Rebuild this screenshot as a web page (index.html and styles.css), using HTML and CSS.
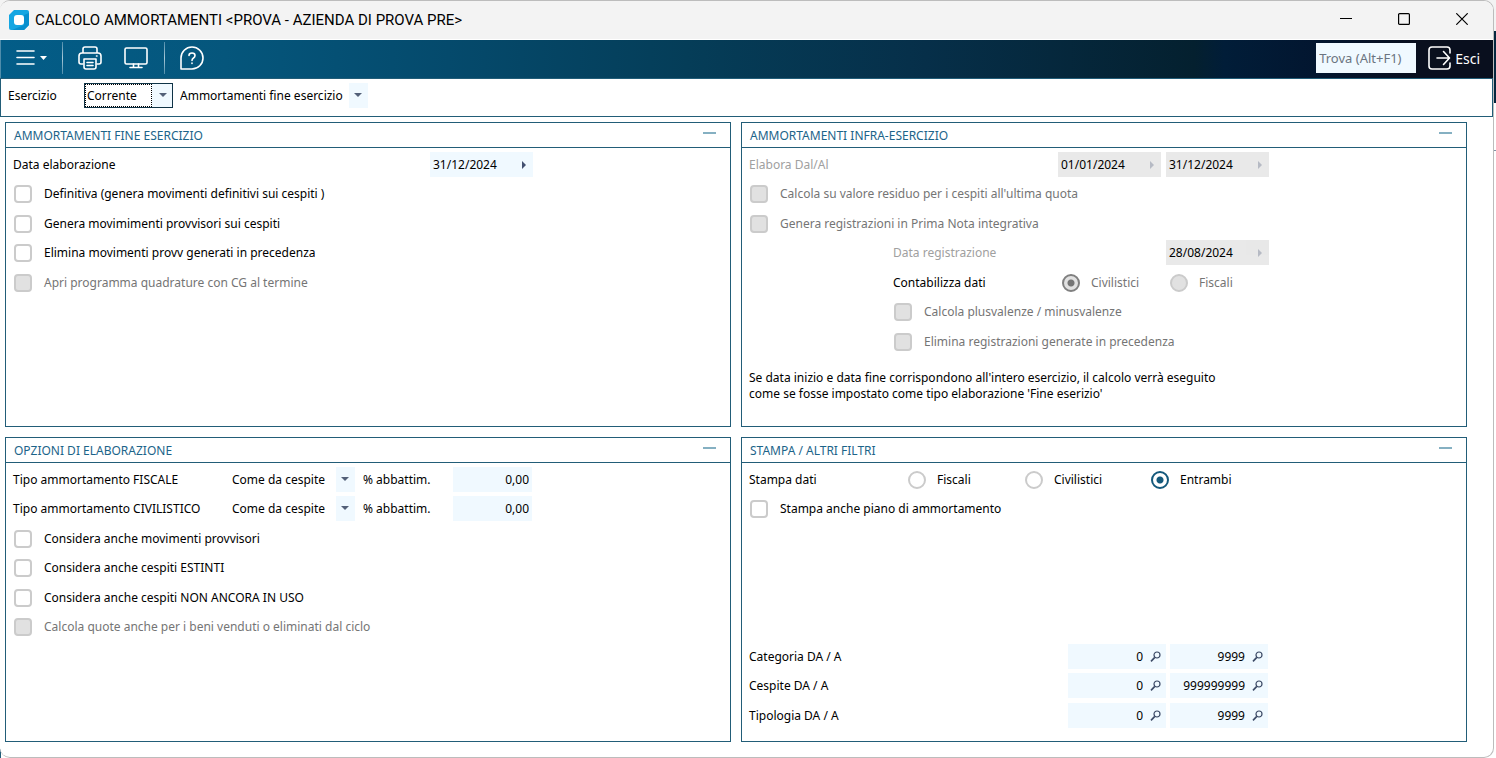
FILE: index.html
```html
<!DOCTYPE html>
<html lang="it">

<head>
    <meta charset="UTF-8">
    <meta name="viewport" content="width=device-width, initial-scale=1.0">
    <title>Calcolo ammortamenti</title>
    <link rel="stylesheet" href="styles.css">
</head>

<body>
    <svg class="sprite" aria-hidden="true">
        <symbol id="lens" viewBox="0 0 12 12">
            <circle cx="7" cy="4" r="3" fill="none" stroke="currentColor" stroke-width="1.2" />
            <path d="M4.8 6.4L1 10.4" fill="none" stroke="currentColor" stroke-width="1.6" />
        </symbol>
    </svg>

    <div class="window">
        <header class="titlebar">
            <svg class="logo" viewBox="0 0 20 20">
                <path d="M5 0H20V15L15 20H0V5Z" fill="#14a6e2" />
                <path d="M20 3V15L15 20H3L15 15V5Z" fill="#078fce" />
                <rect x="5" y="5" width="10" height="10" rx="3" fill="#fff" />
            </svg>
            <h1>CALCOLO AMMORTAMENTI &lt;PROVA - AZIENDA DI PROVA PRE&gt;</h1>
            <div class="window-buttons">
                <button type="button" aria-label="Riduci a icona">
                    <svg viewBox="0 0 12 12"><path d="M0 5.500H12" /></svg>
                </button>
                <button type="button" aria-label="Ingrandisci">
                    <svg viewBox="0 0 12 12"><rect x=".6" y=".6" width="10.8" height="10.8" rx="1" /></svg>
                </button>
                <button type="button" aria-label="Chiudi">
                    <svg viewBox="0 0 12 12"><path d="M.3 .3L11.7 11.7M11.7 .3L.3 11.7" /></svg>
                </button>
            </div>
        </header>

        <nav class="toolbar">
            <button type="button" class="tool menu" aria-label="Menu">
                <svg viewBox="0 0 32 24">
                    <path d="M2 5H19M2 11.500H19M2 18H19" />
                    <path d="M25 10H32L28.500 14Z" class="solid" />
                </svg>
            </button>
            <span class="divider"></span>
            <button type="button" class="tool" aria-label="Stampa">
                <svg viewBox="0 0 24 24">
                    <path d="M5 7V3Q5 1 7 1H17Q19 1 19 3V7M5 18H3Q1 18 1 16V10Q1 7 4 7H20Q23 7 23 10V16Q23 18 21 18H19" />
                    <path d="M6 13H18V21Q18 23 16 23H8Q6 23 6 21ZM9 16.500H15M9 19.500H15M18.500 10H19" />
                </svg>
            </button>
            <button type="button" class="tool last" aria-label="Video">
                <svg viewBox="0 0 24 24">
                    <rect x="1" y="2" width="22" height="16" rx="1.5" />
                    <path d="M9.500 18V21M14.500 18V21M6 21.500H18" />
                </svg>
            </button>
            <span class="divider"></span>
            <button type="button" class="tool" aria-label="Aiuto">
                <svg viewBox="0 0 24 24">
                    <path d="M1 23V12A11 11 0 1 1 12 23Z" />
                    <path d="M9 9.500Q9 7 12 7Q15 7 15 9.500Q15 11 13.500 12Q12 13 12 14.500M12 17V17.500" />
                </svg>
            </button>
            <input type="text" class="search" placeholder="Trova (Alt+F1)" aria-label="Trova">
            <button type="button" class="exit">
                <svg viewBox="0 0 24 24">
                    <path d="M22 7V4Q22 1 19 1H4Q1 1 1 4V20Q1 23 4 23H19Q22 23 22 20V17" />
                    <path d="M9 12H21M15.500 5.500L21.500 12L15.500 18.500" />
                </svg>
                Esci
            </button>
        </nav>

        <div class="filters">
            <label for="esercizio">Esercizio</label>
            <select id="esercizio" class="focused">
                <option>Corrente</option>
            </select>
            <select class="tipo" aria-label="Tipo elaborazione">
                <option>Ammortamenti fine esercizio</option>
            </select>
        </div>

        <main class="panels">
            <section class="panel">
                <div class="panel-head">
                    <h2>AMMORTAMENTI FINE ESERCIZIO</h2>
                    <button type="button" aria-label="Comprimi"></button>
                </div>
                <div class="rows">
                    <div class="row">
                        <label for="data-elab" class="name-date">Data elaborazione</label>
                        <span class="date"><input type="text" id="data-elab" value="31/12/2024"><button type="button" aria-label="Calendario"></button></span>
                    </div>
                    <label class="row"><input type="checkbox">Definitiva (genera movimenti definitivi sui cespiti )</label>
                    <label class="row"><input type="checkbox">Genera movimimenti provvisori sui cespiti</label>
                    <label class="row"><input type="checkbox">Elimina movimenti provv generati in precedenza</label>
                    <label class="row off"><input type="checkbox" disabled>Apri programma quadrature con CG al termine</label>
                </div>
            </section>

            <section class="panel">
                <div class="panel-head">
                    <h2>AMMORTAMENTI INFRA-ESERCIZIO</h2>
                    <button type="button" aria-label="Comprimi"></button>
                </div>
                <div class="rows">
                    <div class="row">
                        <label for="dal" class="name-range pale">Elabora Dal/Al</label>
                        <span class="date"><input type="text" id="dal" value="01/01/2024" disabled><button type="button" aria-label="Calendario" disabled></button></span>
                        <span class="date"><input type="text" aria-label="Al" value="31/12/2024" disabled><button type="button" aria-label="Calendario" disabled></button></span>
                    </div>
                    <label class="row off"><input type="checkbox" disabled>Calcola su valore residuo per i cespiti all'ultima quota</label>
                    <label class="row off"><input type="checkbox" disabled>Genera registrazioni in Prima Nota integrativa</label>
                    <div class="row nested">
                        <label for="data-reg" class="name-reg pale">Data registrazione</label>
                        <span class="date"><input type="text" id="data-reg" value="28/08/2024" disabled><button type="button" aria-label="Calendario" disabled></button></span>
                    </div>
                    <div class="row nested" role="radiogroup" aria-label="Contabilizza dati">
                        <span class="name-cont">Contabilizza dati</span>
                        <label class="choice short off"><input type="radio" name="contabilizza" checked disabled>Civilistici</label>
                        <label class="choice short off"><input type="radio" name="contabilizza" disabled>Fiscali</label>
                    </div>
                    <label class="row nested off"><input type="checkbox" disabled>Calcola plusvalenze / minusvalenze</label>
                    <label class="row nested off"><input type="checkbox" disabled>Elimina registrazioni generate in precedenza</label>
                </div>
                <p class="note">Se data inizio e data fine corrispondono all'intero esercizio, il calcolo verrà eseguito<br>come se fosse impostato come tipo elaborazione 'Fine eserizio'</p>
            </section>

            <section class="panel">
                <div class="panel-head">
                    <h2>OPZIONI DI ELABORAZIONE</h2>
                    <button type="button" aria-label="Comprimi"></button>
                </div>
                <div class="rows">
                    <div class="row">
                        <label for="tipo-fisc" class="name-tipo">Tipo ammortamento FISCALE</label>
                        <select id="tipo-fisc" class="come">
                            <option>Come da cespite</option>
                        </select>
                        <label for="abb-fisc" class="name-perc">% abbattim.</label>
                        <input type="text" id="abb-fisc" class="amount" value="0,00">
                    </div>
                    <div class="row">
                        <label for="tipo-civ" class="name-tipo">Tipo ammortamento CIVILISTICO</label>
                        <select id="tipo-civ" class="come">
                            <option>Come da cespite</option>
                        </select>
                        <label for="abb-civ" class="name-perc">% abbattim.</label>
                        <input type="text" id="abb-civ" class="amount" value="0,00">
                    </div>
                    <label class="row"><input type="checkbox">Considera anche movimenti provvisori</label>
                    <label class="row"><input type="checkbox">Considera anche cespiti ESTINTI</label>
                    <label class="row"><input type="checkbox">Considera anche cespiti NON ANCORA IN USO</label>
                    <label class="row off"><input type="checkbox" disabled>Calcola quote anche per i beni venduti o eliminati dal ciclo</label>
                </div>
            </section>

            <section class="panel">
                <div class="panel-head">
                    <h2>STAMPA / ALTRI FILTRI</h2>
                    <button type="button" aria-label="Comprimi"></button>
                </div>
                <div class="rows">
                    <div class="row" role="radiogroup" aria-label="Stampa dati">
                        <span class="name-stampa">Stampa dati</span>
                        <label class="choice"><input type="radio" name="stampa">Fiscali</label>
                        <label class="choice wide"><input type="radio" name="stampa">Civilistici</label>
                        <label class="choice"><input type="radio" name="stampa" checked>Entrambi</label>
                    </div>
                    <label class="row"><input type="checkbox">Stampa anche piano di ammortamento</label>
                </div>
                <div class="rows bottom">
                    <div class="row">
                        <label for="cat-da" class="name-lookup">Categoria DA / A</label>
                        <span class="lookup"><input type="text" id="cat-da" value="0"><button type="button" aria-label="Cerca"><svg><use href="#lens" /></svg></button></span>
                        <span class="lookup"><input type="text" aria-label="Categoria A" value="9999"><button type="button" aria-label="Cerca"><svg><use href="#lens" /></svg></button></span>
                    </div>
                    <div class="row">
                        <label for="cesp-da" class="name-lookup">Cespite DA / A</label>
                        <span class="lookup"><input type="text" id="cesp-da" value="0"><button type="button" aria-label="Cerca"><svg><use href="#lens" /></svg></button></span>
                        <span class="lookup"><input type="text" aria-label="Cespite A" value="999999999"><button type="button" aria-label="Cerca"><svg><use href="#lens" /></svg></button></span>
                    </div>
                    <div class="row">
                        <label for="tip-da" class="name-lookup">Tipologia DA / A</label>
                        <span class="lookup"><input type="text" id="tip-da" value="0"><button type="button" aria-label="Cerca"><svg><use href="#lens" /></svg></button></span>
                        <span class="lookup"><input type="text" aria-label="Tipologia A" value="9999"><button type="button" aria-label="Cerca"><svg><use href="#lens" /></svg></button></span>
                    </div>
                </div>
            </section>
        </main>
    </div>
</body>

</html>
```
FILE: styles.css
```css
* {
    box-sizing: border-box;
}

body {
    margin: 0;
    padding-right: 2px;
    font-family: "Noto Sans", Tahoma, sans-serif;
    font-size: 12px;
    color: #000;
    background: linear-gradient(#225d78, #225d78) no-repeat left bottom / 1px 9px,
        linear-gradient(#f3f3f3 31px, #04273f 31px, #04273f 103px, #fff 103px, #fff 150px, #8192a5 150px, #8192a5 151px, #fff 151px);
}

input,
select,
button {
    font: inherit;
    color: inherit;
    margin: 0;
    padding: 0;
    border: none;
    border-radius: 0;
    background: none;
    outline: none;
}

.sprite {
    display: none;
}

.window {
    display: flex;
    flex-direction: column;
    min-height: 100vh;
    overflow: hidden;
    background: #fff;
    border: 1px solid #bcbcbc;
    border-left: none;
    border-radius: 10px;
}

/* Barra del titolo */
.titlebar {
    display: flex;
    align-items: center;
    height: 39px;
    padding: 0 2px 0 9px;
    background: #f3f3f3;
    border-bottom: 1px solid #fff;
}

.logo {
    width: 20px;
    height: 20px;
    border-radius: 2px;
}

.titlebar h1 {
    flex: 1;
    margin: 0 0 0 6px;
    font-family: Roboto, "Segoe UI", sans-serif;
    font-size: 15px;
    font-weight: normal;
}

.window-buttons {
    display: flex;
}

.window-buttons button {
    width: 58px;
    height: 38px;
}

.window-buttons svg {
    width: 12px;
    height: 12px;
    fill: none;
    stroke: #000;
    stroke-width: 1.2;
}

/* Barra degli strumenti */
.toolbar {
    display: flex;
    align-items: center;
    height: 38px;
    padding: 0 13px 2px 16px;
    color: #fff;
    border-left: 1px solid #4f8dab;
    background: linear-gradient(90deg, #035d88, #05567c 15%, #054a6c 30%, #053d58 46%, #062f49 62%, #04202f 80%, #011d38 82%, #021630 88%, #090f1e 95%);
}

.tool,
.exit {
    display: flex;
    align-items: center;
}

.toolbar svg {
    width: 24px;
    height: 24px;
    fill: none;
    stroke: #fff;
    stroke-width: 1.6;
    stroke-linecap: round;
    stroke-linejoin: round;
}

.tool {
    margin-right: 22px;
}

.menu {
    margin: 0 15px 0 -2px;
}

.last {
    margin-right: 16px;
}

.menu svg {
    width: 32px;
}

.toolbar .solid {
    fill: #fff;
    stroke: none;
}

.divider {
    width: 1px;
    height: 32px;
    margin-right: 15px;
    background: linear-gradient(#4f8dab, #a9c9d8, #4f8dab);
}

.search {
    width: 100px;
    height: 30px;
    margin: 0 12px 0 auto;
    padding: 0 3px;
    font-size: 13px;
    background: #f0f9ff;
}

.search::placeholder {
    color: #6b7480;
}

.exit {
    gap: 3px;
    font-size: 14px;
}

/* Filtri */
.filters {
    display: flex;
    align-items: center;
    height: 39px;
    padding: 0 7px 4px;
    border: 1px solid #225d78;
}

.filters label {
    width: 76px;
}

select {
    appearance: none;
    height: 25px;
    background: url("data:image/svg+xml,%3Csvg xmlns='http://www.w3.org/2000/svg' width='8' height='5'%3E%3Cpath d='M0 0H8L4 4Z' fill='%23536078'/%3E%3C/svg%3E") no-repeat right 6px center,
        linear-gradient(#f0f9ff, #f0f9ff) no-repeat right / 19px 100%;
}

.focused {
    width: 89px;
    margin-right: 7px;
    padding-left: 2px;
    border: 1px solid #0f3346;
    background: url("data:image/svg+xml,%3Csvg xmlns='http://www.w3.org/2000/svg' width='67' height='23'%3E%3Cpath d='M0 .5H67M0 22.5H67M.5 0V23M66.5 0V23' fill='none' stroke='%23000' stroke-dasharray='1 1'/%3E%3C/svg%3E") no-repeat left center,
        url("data:image/svg+xml,%3Csvg xmlns='http://www.w3.org/2000/svg' width='8' height='5'%3E%3Cpath d='M0 0H8L4 4Z' fill='%23536078'/%3E%3C/svg%3E") no-repeat right 5px center,
        linear-gradient(#f0f9ff, #f0f9ff) no-repeat right / 20px 100%;
}

.tipo {
    width: 188px;
}

/* Riquadri */
.panels {
    flex: 1;
    display: grid;
    grid-template-columns: 1fr 1fr;
    grid-template-rows: 1fr 1fr;
    gap: 10px;
    padding: 5px 26px 15px 5px;
}

.panel {
    display: flex;
    flex-direction: column;
    border: 1px solid #225d78;
}

.panel-head {
    display: flex;
    justify-content: space-between;
    height: 25px;
    padding: 0 14px 0 8px;
    border-bottom: 1px solid #225d78;
}

.panel-head h2 {
    margin: 0;
    font-size: 12px;
    font-weight: normal;
    line-height: 25px;
    color: #1c6489;
}

.panel-head button {
    width: 13px;
    height: 2px;
    margin-top: 9px;
    background: #85b0c2;
}

.rows {
    display: flex;
    flex-direction: column;
    gap: 4px;
    padding: 4px 7px;
}

.bottom {
    margin-top: auto;
    padding-bottom: 13px;
}

.row {
    display: flex;
    align-items: center;
    height: 25px;
}

.row:nth-child(even) {
    margin-bottom: 1px;
}

.nested {
    margin-left: 144px;
}

.off {
    color: #757575;
}

.pale {
    color: #a0a0a0;
}

.name-date {
    width: 417px;
}

.name-range {
    width: 309px;
}

.name-reg {
    width: 273px;
}

.name-cont {
    width: 168px;
}

.name-tipo {
    width: 219px;
}

.name-perc {
    width: 98px;
    padding-left: 8px;
}

.name-stampa {
    width: 158px;
}

.name-lookup {
    width: 319px;
}

input[type="checkbox"],
input[type="radio"] {
    appearance: none;
    flex: none;
    width: 18px;
    height: 18px;
    margin: 0 12px 0 1px;
    border: 2px solid #cbcbcb;
    border-radius: 4px;
    background: #fff;
}

input[type="radio"] {
    margin-right: 11px;
    border-radius: 50%;
}

input[type="checkbox"]:disabled,
input[type="radio"]:disabled {
    background: #e1e1e1;
}

input[type="radio"]:checked {
    border-color: #14597c;
    background: radial-gradient(circle, #14597c 3px, #fff 4px);
}

input[type="radio"]:checked:disabled {
    border-color: #808080;
    background: radial-gradient(circle, #757575 3px, #e1e1e1 4px);
}

.choice {
    display: flex;
    align-items: center;
    width: 117px;
}

.short {
    width: 108px;
}

.wide {
    width: 126px;
}

.date {
    display: flex;
    width: 103px;
    height: 25px;
    margin-right: 5px;
    background: #f0f9ff;
}

.date input {
    width: 80px;
    padding-left: 3px;
}

.date button {
    flex: 1;
    background: url("data:image/svg+xml,%3Csvg xmlns='http://www.w3.org/2000/svg' width='5' height='8'%3E%3Cpath d='M0 0L4 4L0 8Z' fill='%23435070'/%3E%3C/svg%3E") no-repeat 12px center;
}

.date:has(:disabled) {
    background: #e9e9e9;
}

.date input:disabled {
    color: #000;
}

.date button:disabled {
    opacity: 0.3;
}

.come {
    width: 123px;
}

.amount {
    width: 79px;
    height: 25px;
    padding-right: 3px;
    text-align: right;
    background: #f0f9ff;
}

.lookup {
    display: flex;
    width: 98px;
    height: 25px;
    margin-right: 4px;
    background: #f0f9ff;
}

.lookup input {
    width: 75px;
    text-align: right;
}

.lookup button {
    display: flex;
    align-items: center;
    padding-left: 7px;
    color: #3c4a66;
}

.lookup svg {
    width: 12px;
    height: 12px;
}

.note {
    margin: 12px 7px;
    line-height: 16px;
}
```
